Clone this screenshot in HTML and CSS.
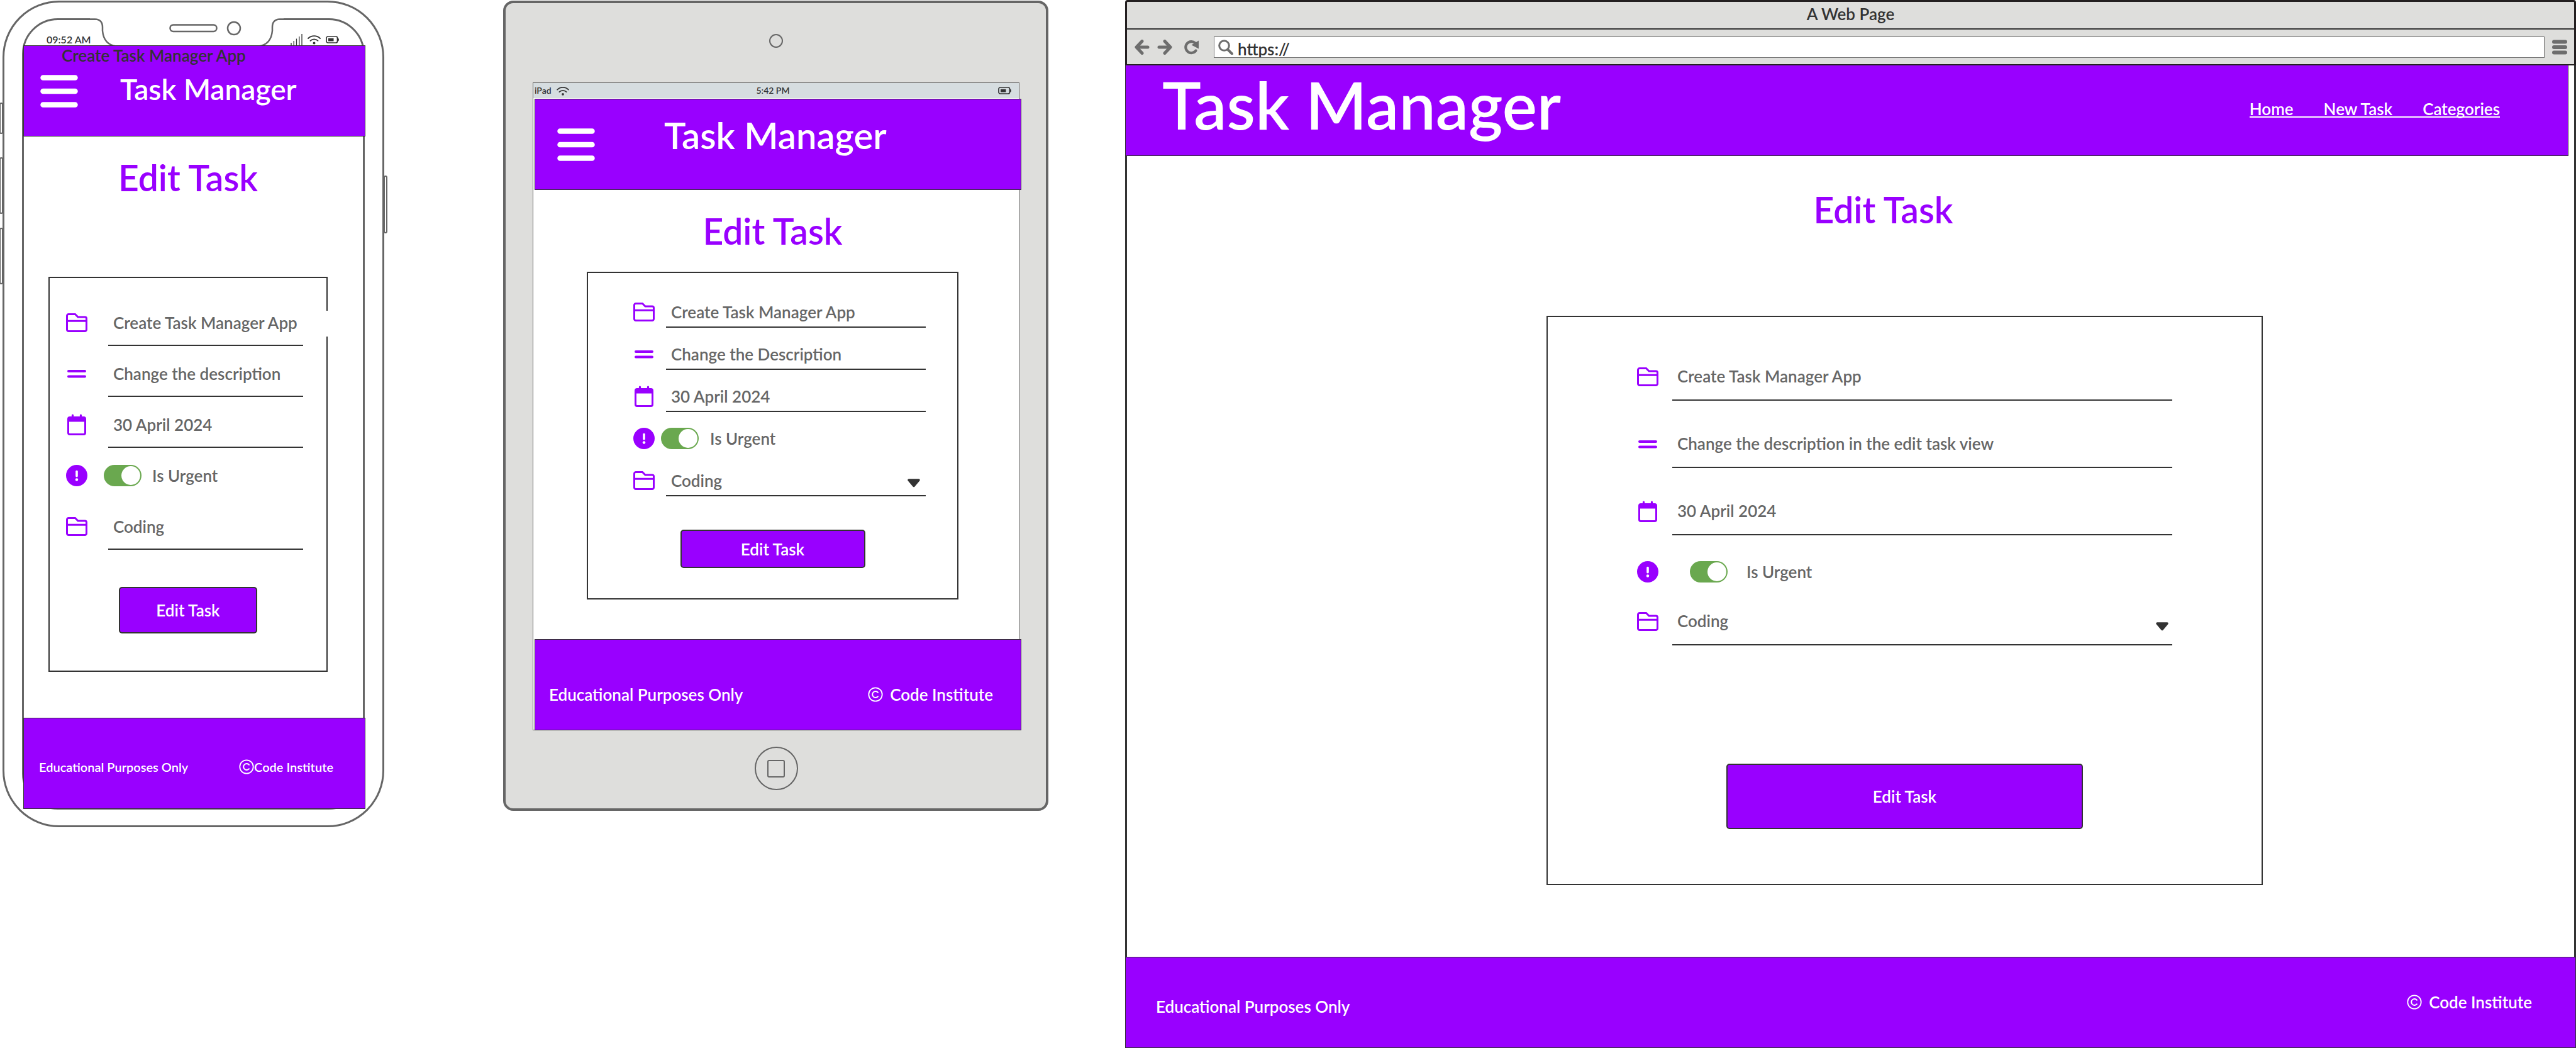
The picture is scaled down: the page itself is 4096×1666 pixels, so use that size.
FILE: index.html
```
<!DOCTYPE html>
<html lang="en">
<head>
<meta charset="utf-8">
<title>Task Manager – Edit Task</title>
<link rel="stylesheet" href="styles.css">
</head>
<body>
<svg class="sprite" aria-hidden="true">
  <symbol id="folder" viewBox="0 0 34 30"><path d="M1.500 4A2.500 2.500 0 0 1 4 1.500H14.500L19 6H30a2.500 2.500 0 0 1 2.500 2.500V26a2.500 2.500 0 0 1-2.500 2.500H4A2.500 2.500 0 0 1 1.500 26ZM1.500 12.200H32.500" fill="none" stroke="currentColor" stroke-width="3"/></symbol>
  <symbol id="lines" viewBox="0 0 34 30"><path d="M4 11H30M4 19.500H30" fill="none" stroke="currentColor" stroke-width="4" stroke-linecap="round"/></symbol>
  <symbol id="calendar" viewBox="0 0 34 34"><path d="M10.500 2V8M23.500 2V8" stroke="currentColor" stroke-width="3.200" stroke-linecap="round"/><path d="M6 5.500H28A2.500 2.500 0 0 1 30.500 8V30A2.500 2.500 0 0 1 28 32.500H6A2.500 2.500 0 0 1 3.500 30V8A2.500 2.500 0 0 1 6 5.500Z" fill="none" stroke="currentColor" stroke-width="3"/><path d="M3 6H31V12.500H3Z" fill="currentColor"/></symbol>
  <symbol id="alert" viewBox="0 0 34 34"><circle cx="17" cy="17" r="17" fill="currentColor"/><path d="M17 10.500V17.800" stroke="#fff" stroke-width="3.600" stroke-linecap="round"/><circle cx="17" cy="23.500" r="2.200" fill="#fff"/></symbol>
  <symbol id="caret" viewBox="0 0 22 14"><path d="M3 2H19L11 11.500Z" fill="currentColor" stroke="currentColor" stroke-width="3.500" stroke-linejoin="round"/></symbol>
  <symbol id="menu" viewBox="0 0 60 52"><path d="M4.500 4.500H55.500M4.500 26H55.500M4.500 47.500H55.500" stroke="currentColor" stroke-width="8.500" stroke-linecap="round"/></symbol>
  <symbol id="copyright" viewBox="0 0 24 24"><circle cx="12" cy="12" r="10.700" fill="none" stroke="currentColor" stroke-width="1.800"/><path d="M16 8.800A5 5 0 1 0 16 15.200" fill="none" stroke="currentColor" stroke-width="2" stroke-linecap="round"/></symbol>
  <symbol id="wifi" viewBox="0 0 21 16"><path d="M1 6A13.500 13.500 0 0 1 20 6M4.500 9.800A8.500 8.500 0 0 1 16.500 9.800" fill="none" stroke="currentColor" stroke-width="1.800" stroke-linecap="round"/><circle cx="10.500" cy="13.600" r="2" fill="currentColor"/></symbol>
  <symbol id="battery" viewBox="0 0 21 12"><rect x="1" y="1" width="17.500" height="10" rx="2.500" fill="none" stroke="currentColor" stroke-width="1.700"/><path d="M4 3.700H12.500V8.500H4ZM19 3.500Q21 3.500 21 6T19 8.500Z" fill="currentColor"/></symbol>
</svg>

<main class="board">

  <section class="phone" aria-label="Phone">
    <i class="side-key key-mute"></i><i class="side-key key-up"></i><i class="side-key key-down"></i><i class="side-key key-power"></i>
    <div class="phone-screen">
      <svg class="notch" viewBox="0 0 308 46" aria-hidden="true">
        <path d="M0 0H308V2H302Q290 2 290 14V20Q288 42 268 45H42Q22 42 20 20V14Q20 2 8 2H0Z" fill="#fff"/>
        <path d="M0 1.500H8Q20 2 20 14V20Q22 42 42 44.500H268Q288 42 290 20V14Q290 2 302 1.500H308" fill="none" stroke="#666" stroke-width="2.500"/>
        <rect x="127.500" y="10.500" width="74" height="10.500" rx="5" fill="none" stroke="#666" stroke-width="2.500"/>
        <circle cx="229" cy="16" r="10" fill="none" stroke="#666" stroke-width="2.500"/>
      </svg>
      <div class="phone-status">
        <span>09:52 AM</span>
        <span class="status-icons">
          <svg width="19" height="18" viewBox="0 0 19 18"><path d="M1 14V18M5.200 11V18M9.500 7.500V18M13.800 4V18M18 0V18" stroke="#333" stroke-width="1.300"/></svg>
          <svg width="21" height="16"><use href="#wifi"/></svg>
          <svg width="21" height="12"><use href="#battery"/></svg>
        </span>
      </div>
      <header class="bar">
        <span class="stray">Create Task Manager App</span>
        <button class="menu-button" type="button" aria-label="Menu"><svg width="60" height="52"><use href="#menu"/></svg></button>
        <h1 class="brand">Task Manager</h1>
      </header>
      <div class="content">
        <h2 class="heading">Edit Task</h2>
        <form class="card">
          <div class="row"><label class="icon" for="p-title"><svg width="34" height="30"><use href="#folder"/></svg></label><input class="field" id="p-title" aria-label="Title" value="Create Task Manager App"></div>
          <div class="row"><label class="icon" for="p-desc"><svg width="34" height="30"><use href="#lines"/></svg></label><input class="field" id="p-desc" aria-label="Description" value="Change the description"></div>
          <div class="row"><label class="icon" for="p-date"><svg width="34" height="34"><use href="#calendar"/></svg></label><input class="field" id="p-date" aria-label="Due date" value="30 April 2024"></div>
          <div class="row urgent"><span class="icon"><svg width="34" height="34"><use href="#alert"/></svg></span><input class="toggle" type="checkbox" id="p-urgent" checked><label for="p-urgent">Is Urgent</label></div>
          <div class="row"><label class="icon" for="p-cat"><svg width="34" height="30"><use href="#folder"/></svg></label><select class="field" id="p-cat" aria-label="Category"><option>Coding</option></select></div>
          <button class="submit" type="button">Edit Task</button>
        </form>
      </div>
      <footer class="foot"><span>Educational Purposes Only</span><span class="copy"><svg width="24" height="24"><use href="#copyright"/></svg>Code Institute</span></footer>
    </div>
  </section>

  <section class="tablet" aria-label="Tablet">
    <i class="lens"></i>
    <div class="tablet-screen">
      <div class="tablet-status">
        <span class="carrier">iPad <svg width="20" height="15"><use href="#wifi"/></svg></span>
        <span>5:42 PM</span>
        <span class="power"><svg width="21" height="12"><use href="#battery"/></svg></span>
      </div>
      <header class="bar">
        <button class="menu-button" type="button" aria-label="Menu"><svg width="60" height="52"><use href="#menu"/></svg></button>
        <h1 class="brand">Task Manager</h1>
      </header>
      <div class="content">
        <h2 class="heading">Edit Task</h2>
        <form class="card">
          <div class="row"><label class="icon" for="t-title"><svg width="34" height="30"><use href="#folder"/></svg></label><input class="field" id="t-title" aria-label="Title" value="Create Task Manager App"></div>
          <div class="row"><label class="icon" for="t-desc"><svg width="34" height="30"><use href="#lines"/></svg></label><input class="field" id="t-desc" aria-label="Description" value="Change the Description"></div>
          <div class="row"><label class="icon" for="t-date"><svg width="34" height="34"><use href="#calendar"/></svg></label><input class="field" id="t-date" aria-label="Due date" value="30 April 2024"></div>
          <div class="row urgent"><span class="icon"><svg width="34" height="34"><use href="#alert"/></svg></span><input class="toggle" type="checkbox" id="t-urgent" checked><label for="t-urgent">Is Urgent</label></div>
          <div class="row"><label class="icon" for="t-cat"><svg width="34" height="30"><use href="#folder"/></svg></label><select class="field" id="t-cat" aria-label="Category"><option>Coding</option></select><svg class="caret" width="22" height="14"><use href="#caret"/></svg></div>
          <button class="submit" type="button">Edit Task</button>
        </form>
      </div>
      <footer class="foot"><span>Educational Purposes Only</span><span class="copy"><svg width="24" height="24"><use href="#copyright"/></svg>Code Institute</span></footer>
    </div>
    <i class="home-key"></i>
  </section>

  <section class="browser" aria-label="Browser">
    <div class="chrome">
      <div class="title-bar">A Web Page</div>
      <div class="toolbar">
        <button type="button" aria-label="Back"><svg width="24" height="24" viewBox="0 0 24 24"><path d="M12 2.500L3 12L12 21.500M4 12H21" fill="none" stroke="currentColor" stroke-width="5" stroke-linecap="round" stroke-linejoin="round"/></svg></button>
        <button type="button" aria-label="Forward"><svg width="24" height="24" viewBox="0 0 24 24"><path d="M12 2.500L21 12L12 21.500M20 12H3" fill="none" stroke="currentColor" stroke-width="5" stroke-linecap="round" stroke-linejoin="round"/></svg></button>
        <button class="reload" type="button" aria-label="Reload"><svg width="24" height="24" viewBox="0 0 24 24"><path d="M18.500 5.500A9 9 0 1 0 19.500 17.500" fill="none" stroke="currentColor" stroke-width="4.200" stroke-linecap="round"/><path d="M24 1.500V14.500L12.500 8.500Z" fill="currentColor"/></svg></button>
        <div class="address">
          <svg width="24" height="24" viewBox="0 0 24 24"><circle cx="9.500" cy="9.500" r="7.800" fill="none" stroke="currentColor" stroke-width="3"/><path d="M15.500 16L22 22.500" stroke="currentColor" stroke-width="4" stroke-linecap="round"/></svg>
          <input class="url" aria-label="Address" value="https://">
        </div>
        <button class="more" type="button" aria-label="More"><svg width="24" height="24" viewBox="0 0 24 24"><path d="M3 3.500H21M3 12H21M3 20.500H21" stroke="currentColor" stroke-width="6" stroke-linecap="round"/></svg></button>
      </div>
    </div>
    <div class="page">
      <header class="bar">
        <h1 class="brand">Task Manager</h1>
        <nav class="links"><a href="#">Home</a><a href="#">New Task</a><a href="#">Categories</a></nav>
      </header>
      <div class="content">
        <h2 class="heading">Edit Task</h2>
        <form class="card">
          <div class="row"><label class="icon" for="b-title"><svg width="34" height="30"><use href="#folder"/></svg></label><input class="field" id="b-title" aria-label="Title" value="Create Task Manager App"></div>
          <div class="row"><label class="icon" for="b-desc"><svg width="34" height="30"><use href="#lines"/></svg></label><input class="field" id="b-desc" aria-label="Description" value="Change the description in the edit task view"></div>
          <div class="row"><label class="icon" for="b-date"><svg width="34" height="34"><use href="#calendar"/></svg></label><input class="field" id="b-date" aria-label="Due date" value="30 April 2024"></div>
          <div class="row urgent"><span class="icon"><svg width="34" height="34"><use href="#alert"/></svg></span><input class="toggle" type="checkbox" id="b-urgent" checked><label for="b-urgent">Is Urgent</label></div>
          <div class="row"><label class="icon" for="b-cat"><svg width="34" height="30"><use href="#folder"/></svg></label><select class="field" id="b-cat" aria-label="Category"><option>Coding</option></select><svg class="caret" width="22" height="14"><use href="#caret"/></svg></div>
          <button class="submit" type="button">Edit Task</button>
        </form>
      </div>
      <footer class="foot"><span>Educational Purposes Only</span><span class="copy"><svg width="24" height="24"><use href="#copyright"/></svg>Code Institute</span></footer>
    </div>
  </section>

</main>
</body>
</html>
```
FILE: styles.css
```
* { box-sizing: border-box; }

:root {
  --purple: #9900ff;
  --ink: #333;
  --grey: #666;
  --shell: #dededc;
}

body {
  margin: 0;
  background: #fff;
  color: var(--grey);
  font: 600 26px/32px Lato, "Open Sans", sans-serif;
}

button, input, select { font: inherit; color: inherit; margin: 0; }
button { padding: 0; border: 0; background: none; }
svg { display: block; flex: none; }
h1, h2 { margin: 0; font-weight: 600; }
.sprite { position: absolute; width: 0; height: 0; }

.board { display: flex; align-items: flex-start; min-height: 100vh; }

/* Shared app parts */
.bar {
  display: flex;
  align-items: center;
  height: 145px;
  border: 1px solid var(--ink);
  background: var(--purple);
  color: #fff;
}
.menu-button { flex: none; color: #fff; }
.heading {
  color: var(--purple);
  font-size: 57px;
  line-height: 68px;
  text-align: center;
}
.card {
  position: relative;
  display: flex;
  flex-direction: column;
  border: 2px solid var(--ink);
}
.row { position: relative; display: flex; align-items: center; }
.icon { flex: none; width: 34px; color: var(--purple); }
.field {
  flex: 1;
  min-width: 0;
  height: 100%;
  padding: 2px 8px 0;
  border: 0;
  border-bottom: 2px solid var(--ink);
  border-radius: 0;
  background: transparent;
  appearance: none;
  outline: none;
}
.caret {
  position: absolute;
  right: 8px;
  margin-top: 8px;
  color: var(--ink);
  pointer-events: none;
}
.toggle {
  flex: none;
  width: 60px;
  height: 34px;
  border-radius: 17px;
  background: #6aa84f;
  appearance: none;
}
.toggle::before {
  content: "";
  display: block;
  width: 30px;
  height: 30px;
  margin: 2px 2px 2px 28px;
  border-radius: 50%;
  background: #fff;
}
.submit {
  align-self: center;
  border: 2px solid var(--ink);
  border-radius: 5px;
  background: var(--purple);
  color: #fff;
}
.foot {
  display: flex;
  align-items: center;
  justify-content: space-between;
  height: 145px;
  border: 1px solid var(--ink);
  background: var(--purple);
  color: #fff;
}
.copy { display: flex; align-items: center; gap: 11px; }

/* Phone */
.phone {
  position: relative;
  flex: none;
  width: 607px;
  margin: 1px 189px 0 4px;
  padding: 25px 28px;
  border: 3px solid var(--grey);
  border-radius: 90px;
}
.phone-screen {
  position: relative;
  padding-top: 40px;
  border: 3px solid var(--grey);
  border-radius: 57px;
}
.phone .bar, .phone .foot { margin: 0 -4px 0 -1px; }
.phone .foot { margin-bottom: -2px; }
.side-key {
  position: absolute;
  left: -8px;
  width: 6px;
  border: 2px solid var(--grey);
  border-radius: 3px;
}
.key-mute { top: 159px; height: 50px; }
.key-up { top: 246px; height: 90px; }
.key-down { top: 358px; height: 90px; }
.key-power { top: 275px; left: auto; right: -8px; height: 92px; }
.notch { position: absolute; top: -3px; left: 105px; width: 308px; height: 46px; }
.phone-status {
  display: flex;
  justify-content: space-between;
  align-items: center;
  height: 22px;
  margin-top: -22px;
  padding: 3px 38px 0 36px;
  color: var(--ink);
  font-size: 16px;
  line-height: 20px;
}
.status-icons { display: flex; align-items: center; gap: 8px; }
.phone .bar { position: relative; padding-left: 26px; }
.stray {
  position: absolute;
  top: -1px;
  left: 60px;
  color: var(--ink);
}
.phone .brand { margin-left: 67px; padding-bottom: 6px; font-size: 46px; line-height: 56px; }
.phone .content { padding: 31px 56px 73px 39px; }
.phone .card { margin-top: 124px; padding: 34px 0 59px; gap: 7px; }
.phone .card::after {
  content: "";
  position: absolute;
  top: 52px;
  right: -2px;
  width: 2px;
  height: 41px;
  background: #fff;
}
.phone .row { height: 74px; margin: 0 37px 0 26px; }
.phone .field { margin-left: 33px; }
.phone .toggle { margin: 0 17px 0 26px; }
.phone .submit { width: 220px; height: 74px; margin-top: 52px; }
.phone .foot { padding: 11px 50px 0 24px; font-size: 20px; }
.phone .copy { gap: 0; }

/* Tablet */
.tablet {
  display: flex;
  flex-direction: column;
  align-items: center;
  flex: none;
  width: 867px;
  margin: 1px 122px 0 0;
  padding: 49px 42px 29px 43px;
  border: 4px solid var(--grey);
  border-radius: 16px;
  background: var(--shell);
}
.lens { width: 22px; height: 22px; border: 2px solid var(--grey); border-radius: 50%; }
.tablet-screen {
  width: 100%;
  margin-top: 55px;
  border: 1px solid var(--grey);
  background: #fff;
}
.tablet-status {
  display: grid;
  grid-template-columns: 1fr auto 1fr;
  align-items: center;
  height: 24px;
  margin-bottom: 1px;
  padding: 0 12px 0 2px;
  background: #d6dde0;
  color: var(--ink);
  font-size: 14px;
  line-height: 20px;
}
.carrier { display: flex; align-items: center; gap: 8px; }
.power { justify-self: end; }
.tablet .bar, .tablet .foot { margin: 0 -4px 0 2px; }
.tablet .foot { margin-bottom: -1px; }
.tablet .bar { padding-left: 35px; }
.tablet .brand { margin-left: 110px; padding-bottom: 30px; font-size: 58px; line-height: 68px; }
.tablet .content { padding: 31px 96px 63px 85px; }
.tablet .card { margin-top: 31px; padding: 37px 0 48px; gap: 17px; }
.tablet .row { height: 50px; margin: 0 50px 0 72px; }
.tablet .field { margin-left: 18px; }
.tablet .toggle { margin: 0 18px 0 10px; }
.tablet .submit { width: 294px; height: 61px; margin-top: 36px; }
.tablet .foot { padding: 30px 44px 0 22px; }
.home-key {
  display: grid;
  place-items: center;
  width: 69px;
  height: 69px;
  margin-top: 26px;
  border: 2px solid var(--grey);
  border-radius: 50%;
}
.home-key::before {
  content: "";
  width: 24px;
  height: 24px;
  border: 2px solid var(--grey);
  border-radius: 3px;
}

/* Browser */
.browser {
  display: flex;
  flex-direction: column;
  flex: 1;
  min-width: 0;
  min-height: 100vh;
}
.chrome {
  border: 3px solid #231f20;
  border-bottom-width: 2px;
  border-radius: 4px 4px 0 0;
  background: var(--shell);
  color: var(--ink);
}
.title-bar { height: 44px; padding-top: 3px; border-bottom: 2px solid var(--ink); text-align: center; }
.toolbar {
  display: flex;
  align-items: center;
  gap: 12px;
  height: 55px;
  padding: 0 11px 0 12px;
  color: #6d6d6d;
}
.reload { margin-left: 6px; }
.address {
  display: flex;
  align-items: center;
  flex: 1;
  height: 34px;
  margin-left: 12px;
  padding-left: 6px;
  border: 1px solid #6d6d6d;
  background: #fff;
}
.url {
  flex: 1;
  height: 32px;
  padding: 7px 0 0 7px;
  border: 0;
  background: none;
  color: var(--ink);
  outline: none;
}
.page {
  display: flex;
  flex-direction: column;
  flex: 1;
  border: solid var(--ink);
  border-width: 0 3px;
}
.browser .bar { margin: -1px 9px 0 -3px; padding: 0 108px 0 58px; justify-content: space-between; }
.browser .brand { padding-bottom: 20px; font-size: 104px; line-height: 124px; }
.links { display: flex; gap: 48px; height: 30px; margin-bottom: 8px; border-bottom: 2px solid #fff; }
.links a { color: #fff; text-decoration: none; }
.browser .content {
  display: grid;
  grid-template-columns: 667fr 1139fr 495fr;
  flex: 1;
  align-content: start;
  padding: 51px 0 112px;
}
.browser .heading { grid-column: 1 / -1; padding-left: 104px; }
.browser .card { grid-column: 2; margin-top: 135px; padding: 57px 0 87px; }
.browser .row { height: 76px; margin: 0 142px 31px; }
.browser .field { margin-left: 22px; padding-bottom: 3px; }
.browser .urgent { margin-top: -11px; margin-bottom: 3px; }
.browser .caret { right: 5px; margin-top: 16px; }
.browser .toggle { margin: 0 30px 0 50px; }
.browser .submit { width: 50%; height: 104px; margin-top: 157px; }
.browser .foot { margin: 0 -3px; padding: 13px 69px 0 48px; }
.browser .copy { align-self: flex-start; padding-top: 42px; }
```
